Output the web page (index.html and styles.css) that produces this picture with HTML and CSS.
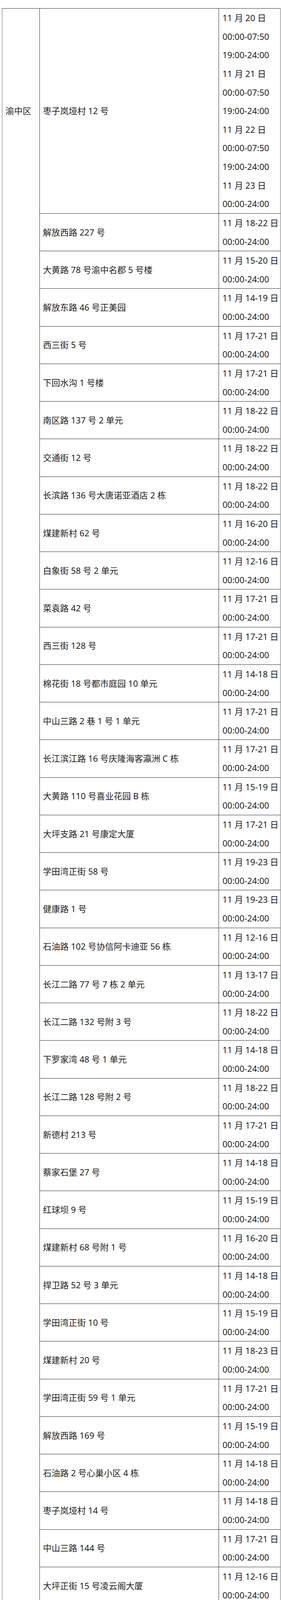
FILE: index.html
```html
<!DOCTYPE html>
<html lang="zh-CN">
<head>
<meta charset="utf-8">
<title>渝中区</title>
<link rel="stylesheet" href="styles.css">
</head>
<body>
<table class="list">
<colgroup><col class="c-dist"><col class="c-addr"><col class="c-time"></colgroup>
<tbody>
<tr class="first"><td class="dist" rowspan="68"><div class="ln">渝中区</div></td><td class="addr">枣子岚垭村 12 号</td><td class="time"><div class="ln">11 月 20 日</div><div class="ln">00:00-07:50</div><div class="ln">19:00-24:00</div><div class="ln">11 月 21 日</div><div class="ln">00:00-07:50</div><div class="ln">19:00-24:00</div><div class="ln">11 月 22 日</div><div class="ln">00:00-07:50</div><div class="ln">19:00-24:00</div><div class="ln">11 月 23 日</div><div class="ln">00:00-24:00</div></td></tr>
<tr><td class="addr">解放西路 227 号</td><td class="time"><div class="ln">11 月 18-22 日</div><div class="ln">00:00-24:00</div></td></tr>
<tr><td class="addr">大黄路 78 号渝中名郡 5 号楼</td><td class="time"><div class="ln">11 月 15-20 日</div><div class="ln">00:00-24:00</div></td></tr>
<tr><td class="addr">解放东路 46 号正美园</td><td class="time"><div class="ln">11 月 14-19 日</div><div class="ln">00:00-24:00</div></td></tr>
<tr><td class="addr">西三街 5 号</td><td class="time"><div class="ln">11 月 17-21 日</div><div class="ln">00:00-24:00</div></td></tr>
<tr><td class="addr">下回水沟 1 号楼</td><td class="time"><div class="ln">11 月 17-21 日</div><div class="ln">00:00-24:00</div></td></tr>
<tr><td class="addr">南区路 137 号 2 单元</td><td class="time"><div class="ln">11 月 18-22 日</div><div class="ln">00:00-24:00</div></td></tr>
<tr><td class="addr">交通街 12 号</td><td class="time"><div class="ln">11 月 18-22 日</div><div class="ln">00:00-24:00</div></td></tr>
<tr><td class="addr">长滨路 136 号大唐诺亚酒店 2 栋</td><td class="time"><div class="ln">11 月 18-22 日</div><div class="ln">00:00-24:00</div></td></tr>
<tr><td class="addr">煤建新村 62 号</td><td class="time"><div class="ln">11 月 16-20 日</div><div class="ln">00:00-24:00</div></td></tr>
<tr><td class="addr">白象街 58 号 2 单元</td><td class="time"><div class="ln">11 月 12-16 日</div><div class="ln">00:00-24:00</div></td></tr>
<tr><td class="addr">菜袁路 42 号</td><td class="time"><div class="ln">11 月 17-21 日</div><div class="ln">00:00-24:00</div></td></tr>
<tr><td class="addr">西三街 128 号</td><td class="time"><div class="ln">11 月 17-21 日</div><div class="ln">00:00-24:00</div></td></tr>
<tr><td class="addr">棉花街 18 号都市庭园 10 单元</td><td class="time"><div class="ln">11 月 14-18 日</div><div class="ln">00:00-24:00</div></td></tr>
<tr><td class="addr">中山三路 2 巷 1 号 1 单元</td><td class="time"><div class="ln">11 月 17-21 日</div><div class="ln">00:00-24:00</div></td></tr>
<tr><td class="addr">长江滨江路 16 号庆隆海客瀛洲 C 栋</td><td class="time"><div class="ln">11 月 17-21 日</div><div class="ln">00:00-24:00</div></td></tr>
<tr><td class="addr">大黄路 110 号喜业花园 B 栋</td><td class="time"><div class="ln">11 月 15-19 日</div><div class="ln">00:00-24:00</div></td></tr>
<tr><td class="addr">大坪支路 21 号康定大厦</td><td class="time"><div class="ln">11 月 17-21 日</div><div class="ln">00:00-24:00</div></td></tr>
<tr><td class="addr">学田湾正街 58 号</td><td class="time"><div class="ln">11 月 19-23 日</div><div class="ln">00:00-24:00</div></td></tr>
<tr><td class="addr">健康路 1 号</td><td class="time"><div class="ln">11 月 19-23 日</div><div class="ln">00:00-24:00</div></td></tr>
<tr><td class="addr">石油路 102 号协信阿卡迪亚 56 栋</td><td class="time"><div class="ln">11 月 12-16 日</div><div class="ln">00:00-24:00</div></td></tr>
<tr><td class="addr">长江二路 77 号 7 栋 2 单元</td><td class="time"><div class="ln">11 月 13-17 日</div><div class="ln">00:00-24:00</div></td></tr>
<tr><td class="addr">长江二路 132 号附 3 号</td><td class="time"><div class="ln">11 月 18-22 日</div><div class="ln">00:00-24:00</div></td></tr>
<tr><td class="addr">下罗家湾 48 号 1 单元</td><td class="time"><div class="ln">11 月 14-18 日</div><div class="ln">00:00-24:00</div></td></tr>
<tr><td class="addr">长江二路 128 号附 2 号</td><td class="time"><div class="ln">11 月 18-22 日</div><div class="ln">00:00-24:00</div></td></tr>
<tr><td class="addr">新德村 213 号</td><td class="time"><div class="ln">11 月 17-21 日</div><div class="ln">00:00-24:00</div></td></tr>
<tr><td class="addr">蔡家石堡 27 号</td><td class="time"><div class="ln">11 月 14-18 日</div><div class="ln">00:00-24:00</div></td></tr>
<tr><td class="addr">红球坝 9 号</td><td class="time"><div class="ln">11 月 15-19 日</div><div class="ln">00:00-24:00</div></td></tr>
<tr><td class="addr">煤建新村 68 号附 1 号</td><td class="time"><div class="ln">11 月 16-20 日</div><div class="ln">00:00-24:00</div></td></tr>
<tr><td class="addr">捍卫路 52 号 3 单元</td><td class="time"><div class="ln">11 月 14-18 日</div><div class="ln">00:00-24:00</div></td></tr>
<tr><td class="addr">学田湾正街 10 号</td><td class="time"><div class="ln">11 月 15-19 日</div><div class="ln">00:00-24:00</div></td></tr>
<tr><td class="addr">煤建新村 20 号</td><td class="time"><div class="ln">11 月 18-23 日</div><div class="ln">00:00-24:00</div></td></tr>
<tr><td class="addr">学田湾正街 59 号 1 单元</td><td class="time"><div class="ln">11 月 17-21 日</div><div class="ln">00:00-24:00</div></td></tr>
<tr><td class="addr">解放西路 169 号</td><td class="time"><div class="ln">11 月 15-19 日</div><div class="ln">00:00-24:00</div></td></tr>
<tr><td class="addr">石油路 2 号心巢小区 4 栋</td><td class="time"><div class="ln">11 月 14-18 日</div><div class="ln">00:00-24:00</div></td></tr>
<tr><td class="addr">枣子岚垭村 14 号</td><td class="time"><div class="ln">11 月 14-18 日</div><div class="ln">00:00-24:00</div></td></tr>
<tr><td class="addr">中山三路 144 号</td><td class="time"><div class="ln">11 月 17-21 日</div><div class="ln">00:00-24:00</div></td></tr>
<tr><td class="addr">大坪正街 15 号凌云阁大厦</td><td class="time"><div class="ln">11 月 12-16 日</div><div class="ln">00:00-24:00</div></td></tr>
<tr><td class="addr">金汤街 24 号</td><td class="time"><div class="ln">11 月 15-19 日</div><div class="ln">00:00-24:00</div></td></tr>
<tr><td class="addr">大坪正街 118 号嘉华鑫城 7 栋</td><td class="time"><div class="ln">11 月 18-22 日</div><div class="ln">00:00-24:00</div></td></tr>
<tr><td class="addr">桂花园 92 号</td><td class="time"><div class="ln">11 月 11-15 日</div><div class="ln">00:00-24:00</div></td></tr>
<tr><td class="addr">人民路 131 号</td><td class="time"><div class="ln">11 月 12-16 日</div><div class="ln">00:00-24:00</div></td></tr>
<tr><td class="addr">金汤街 77 号 1 单元</td><td class="time"><div class="ln">11 月 14-18 日</div><div class="ln">00:00-24:00</div></td></tr>
<tr><td class="addr">蔡家石堡 23 号</td><td class="time"><div class="ln">11 月 14-18 日</div><div class="ln">00:00-24:00</div></td></tr>
<tr><td class="addr">中山三路 155 号</td><td class="time"><div class="ln">11 月 18-22 日</div><div class="ln">00:00-24:00</div></td></tr>
<tr><td class="addr">大黄路 61 号 5 单元</td><td class="time"><div class="ln">11 月 17-21 日</div><div class="ln">00:00-24:00</div></td></tr>
<tr><td class="addr">临华路 28 号</td><td class="time"><div class="ln">11 月 18-22 日</div><div class="ln">00:00-24:00</div></td></tr>
<tr><td class="addr">红球坝 20 号</td><td class="time"><div class="ln">11 月 18-22 日</div><div class="ln">00:00-24:00</div></td></tr>
<tr><td class="addr">张家花园 74 号楼</td><td class="time"><div class="ln">11 月 18-22 日</div><div class="ln">00:00-24:00</div></td></tr>
<tr><td class="addr">枇杷山后街 55 号</td><td class="time"><div class="ln">11 月 17-21 日</div><div class="ln">00:00-24:00</div></td></tr>
<tr><td class="addr">临华路 21 号</td><td class="time"><div class="ln">11 月 18-22 日</div><div class="ln">00:00-24:00</div></td></tr>
<tr><td class="addr">蔡家石堡 8 号</td><td class="time"><div class="ln">11 月 17-21 日</div><div class="ln">00:00-24:00</div></td></tr>
<tr><td class="addr">春森路 60 号 4 单元</td><td class="time"><div class="ln">11 月 17-21 日</div><div class="ln">00:00-24:00</div></td></tr>
<tr><td class="addr">菜袁路 168 号江屿朗廷 B5</td><td class="time"><div class="ln">11 月 17-21 日</div><div class="ln">00:00-24:00</div></td></tr>
<tr><td class="addr">二府衙 37 号楼</td><td class="time"><div class="ln">11 月 14-18 日</div><div class="ln">00:00-24:00</div></td></tr>
<tr><td class="addr">硝房沟右巷 36 号 36-1</td><td class="time"><div class="ln">11 月 16-20 日</div><div class="ln">00:00-24:00</div></td></tr>
<tr><td class="addr">大黄路 168 号星月湾 3 栋</td><td class="time"><div class="ln">11 月 15-19 日</div><div class="ln">00:00-24:00</div></td></tr>
<tr><td class="addr">煤建新村 8 号附 6 号</td><td class="time"><div class="ln">11 月 11-15 日</div><div class="ln">00:00-24:00</div></td></tr>
<tr><td class="addr">长江二路 173 号附 2 号</td><td class="time"><div class="ln">11 月 13-16 日</div><div class="ln">00:00-24:00</div></td></tr>
<tr><td class="addr">大坪支路 9 号 3 栋</td><td class="time"><div class="ln">11 月 10-14 日</div><div class="ln">00:00-24:00</div></td></tr>
<tr><td class="addr">大坪正街 45 号附 3 号城市驿站青年旅舍</td><td class="time"><div class="ln">11 月 20 日</div><div class="ln">00:00-24:00</div></td></tr>
<tr><td class="addr">交通街 14 号</td><td class="time"><div class="ln">11 月 17-21 日</div><div class="ln">00:00-24:00</div></td></tr>
<tr><td class="addr">瑞天路 158 号万科翡翠天麓</td><td class="time"><div class="ln">11 月 16-20 日</div><div class="ln">00:00-24:00</div></td></tr>
<tr><td class="addr">煤建新村 112 号</td><td class="time"><div class="ln">11 月 14-18 日</div><div class="ln">00:00-24:00</div></td></tr>
<tr><td class="addr">民生路 314 号</td><td class="time"><div class="ln">11 月 17-21 日</div><div class="ln">00:00-24:00</div></td></tr>
<tr><td class="addr">上清寺路 81 号天江苑</td><td class="time"><div class="ln">11 月 18-22 日</div><div class="ln">00:00-24:00</div></td></tr>
<tr><td class="addr">中山四路 11 号</td><td class="time"><div class="ln">11 月 17-21 日</div><div class="ln">00:00-24:00</div></td></tr>
<tr><td class="addr">至圣宫 2 号 1 单元</td><td class="time"><div class="ln">11 月 17-22 日</div><div class="ln">00:00-24:00</div></td></tr>
</tbody>
</table>
</body>
</html>
```

FILE: styles.css
```css
html, body {
  margin: 0;
  padding: 0;
  background: #ffffff;
}

body {
  font-family: "Noto Sans", "Noto Sans CJK SC", sans-serif;
  font-size: 22px;
  color: #1e1e1e;
}

.list {
  margin: 21px 0 0 5px;
  width: 713px;
  border-collapse: collapse;
  table-layout: fixed;
  border: 1px solid #666666;
}

.c-dist { width: 96px; }
.c-addr { width: 459px; }
.c-time { width: 158px; }

.list td {
  border: 1px solid #2a2a2a;
  line-height: 47.63px;
  padding: 0;
  white-space: nowrap;
}

.ln {
  display: block;
  height: 47.63px;
  line-height: 47.63px;
  overflow: visible;
}

.list td.dist {
  vertical-align: top;
  padding: 238px 0 0 8px;
  border-left: 1px solid #666666;
  border-bottom: 1px solid #333333;
}

.list td.addr {
  vertical-align: middle;
  padding: 0 8px;
}

.list td.time {
  vertical-align: middle;
  padding: 0 0 0 9px;
  border-right: 1px solid #666666;
}
```
